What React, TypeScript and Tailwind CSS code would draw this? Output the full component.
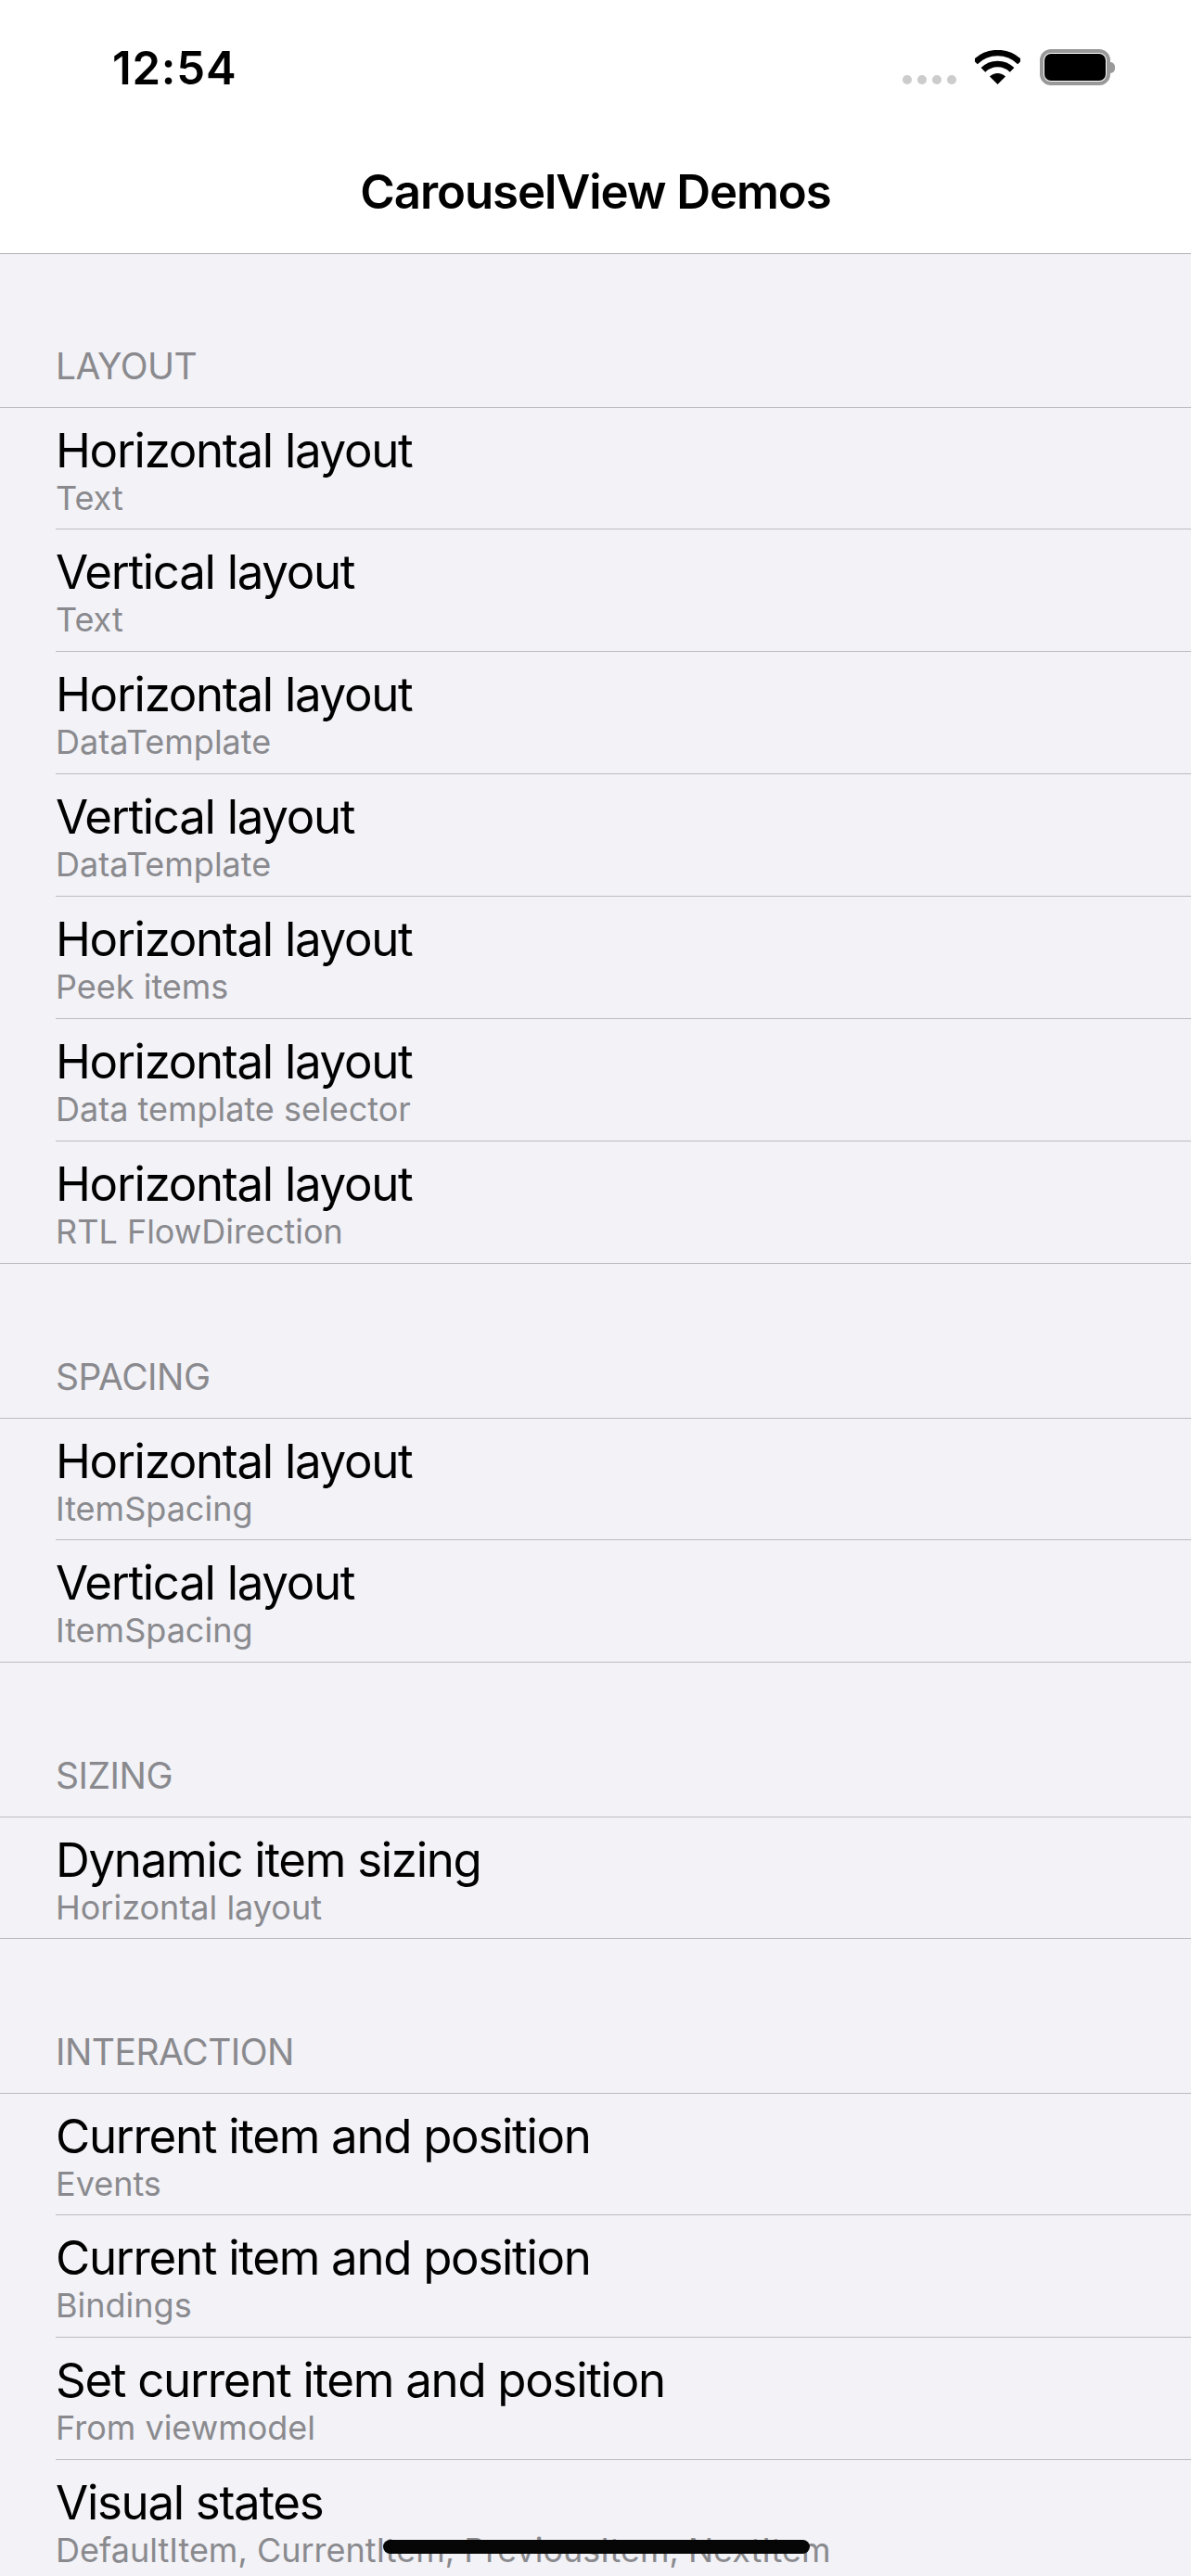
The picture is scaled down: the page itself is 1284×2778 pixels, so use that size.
const font = "font-['Inter',sans-serif]"

interface DemoItem {
  title: string
  subtitle: string
}

interface DemoSection {
  name: string
  items: DemoItem[]
}

const sections: DemoSection[] = [
  {
    name: 'LAYOUT',
    items: [
      { title: 'Horizontal layout', subtitle: 'Text' },
      { title: 'Vertical layout', subtitle: 'Text' },
      { title: 'Horizontal layout', subtitle: 'DataTemplate' },
      { title: 'Vertical layout', subtitle: 'DataTemplate' },
      { title: 'Horizontal layout', subtitle: 'Peek items' },
      { title: 'Horizontal layout', subtitle: 'Data template selector' },
      { title: 'Horizontal layout', subtitle: 'RTL FlowDirection' },
    ],
  },
  {
    name: 'SPACING',
    items: [
      { title: 'Horizontal layout', subtitle: 'ItemSpacing' },
      { title: 'Vertical layout', subtitle: 'ItemSpacing' },
    ],
  },
  {
    name: 'SIZING',
    items: [{ title: 'Dynamic item sizing', subtitle: 'Horizontal layout' }],
  },
  {
    name: 'INTERACTION',
    items: [
      { title: 'Current item and position', subtitle: 'Events' },
      { title: 'Current item and position', subtitle: 'Bindings' },
      { title: 'Set current item and position', subtitle: 'From viewmodel' },
      { title: 'Visual states', subtitle: 'DefaultItem, CurrentItem, PreviousItem, NextItem' },
    ],
  },
]

function WifiIcon() {
  return (
    <svg width="49" height="37" viewBox="0 0 49 37" className="mb-[1px] block">
      <path d="M0.5 13 A34 34 0 0 1 48.5 13" fill="none" stroke="black" strokeWidth="6.5" />
      <path d="M8.9 21.4 A22 22 0 0 1 40.1 21.4" fill="none" stroke="black" strokeWidth="6.5" />
      <path d="M24.5 37 L16 28.5 A12 12 0 0 1 33 28.5 Z" fill="black" />
    </svg>
  )
}

function StatusBar() {
  return (
    <div className="flex h-[92px] justify-between pl-[121px] pr-[82px]">
      <span className={`${font} mt-[49px] self-start text-[49px] leading-[49px] font-semibold tracking-[0.8px] text-black`}>
        12:54
      </span>
      <div className="flex items-end">
        <div className="mb-[1px] mr-[20px] flex gap-[6px]">
          <span className="h-[10px] w-[10px] rounded-full bg-[#cccccc]" />
          <span className="h-[10px] w-[10px] rounded-full bg-[#cccccc]" />
          <span className="h-[10px] w-[10px] rounded-full bg-[#cccccc]" />
          <span className="h-[10px] w-[10px] rounded-full bg-[#cccccc]" />
        </div>
        <WifiIcon />
        <div className="ml-[21px] flex items-center">
          <div className="h-[39px] w-[76px] rounded-[12px] border-[4px] border-[#999999] p-[1px]">
            <div className="h-full w-full rounded-[7px] bg-black" />
          </div>
          <div className="h-[12px] w-[5px] rounded-r-full bg-[#999999]" />
        </div>
      </div>
    </div>
  )
}

function DemoRow({ item, first, last }: { item: DemoItem; first: boolean; last: boolean }) {
  // the first row of a section is a pixel shorter, the last one has a full width rule
  const height = first ? 'h-[131px]' : 'h-[132px]'
  return (
    <div className={last ? `${height} border-b border-[#bcbcc0] pl-[60px]` : `${height} pl-[60px]`}>
      <div className={last ? 'h-full pt-[15px]' : 'h-full border-b border-[#bcbcc0] pt-[15px]'}>
        <div className={`${font} text-[51px] leading-[62px] tracking-[-1.3px] text-black`}>{item.title}</div>
        <div className={`${font} text-[36px] leading-[40px] text-[#8a8a8e]`}>{item.subtitle}</div>
      </div>
    </div>
  )
}

export default function App() {
  return (
    <div className="relative h-[2778px] w-[1284px] overflow-hidden bg-[#f2f2f7]">
      <div className="h-[274px] border-b border-[#b2b2b2] bg-white">
        <StatusBar />
        <div className={`${font} mt-[84px] text-center text-[51px] leading-[62px] font-semibold tracking-[-1.1px] text-black`}>
          CarouselView Demos
        </div>
      </div>
      {sections.map((section, s) => (
        <div key={section.name}>
          <div
            className={
              s === 0
                ? 'flex h-[166px] items-end border-b border-[#bcbcc0] pb-[21px] pl-[60px]'
                : 'flex h-[167px] items-end border-b border-[#bcbcc0] pb-[21px] pl-[60px]'
            }
          >
            <span className={`${font} text-[39px] leading-[46px] tracking-[-0.5px] text-[#8a8a8e]`}>{section.name}</span>
          </div>
          {section.items.map((item, i) => (
            <DemoRow
              key={i}
              item={item}
              first={i === 0}
              last={i === section.items.length - 1 && section.name !== 'INTERACTION'}
            />
          ))}
        </div>
      ))}
      <div className="absolute left-[413px] top-[2739px] h-[15px] w-[460px] rounded-full bg-[#060606]" />
    </div>
  )
}
